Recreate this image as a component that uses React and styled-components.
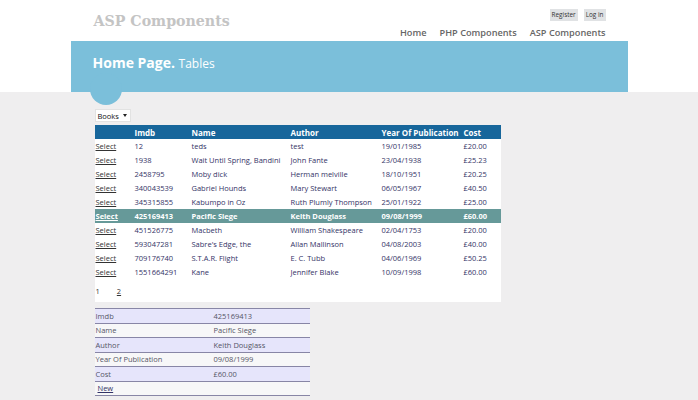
import React from "react";
import styled, { createGlobalStyle } from "styled-components";

const GlobalStyle = createGlobalStyle`
  body {
    margin: 0;
    background: #efeeef;
    font-family: "Open Sans", "Noto Sans", sans-serif;
    color: #333;
  }
`;

const books = [
  ["12", "teds", "test", "19/01/1985", "£20.00"],
  ["1938", "Wait Until Spring, Bandini", "John Fante", "23/04/1938", "£25.23"],
  ["2458795", "Moby dick", "Herman melville", "18/10/1951", "£20.25"],
  ["340043539", "Gabriel Hounds", "Mary Stewart", "06/05/1967", "£40.50"],
  ["345315855", "Kabumpo in Oz", "Ruth Plumly Thompson", "25/01/1922", "£25.00"],
  ["425169413", "Pacific Siege", "Keith Douglass", "09/08/1999", "£60.00"],
  ["451526775", "Macbeth", "William Shakespeare", "02/04/1753", "£20.00"],
  ["593047281", "Sabre's Edge, the", "Allan Mallinson", "04/08/2003", "£40.00"],
  ["709176740", "S.T.A.R. Flight", "E. C. Tubb", "04/06/1969", "£50.25"],
  ["1551664291", "Kane", "Jennifer Blake", "10/09/1998", "£60.00"],
];

const selected = 5;

const details = [
  ["Imdb", "425169413"],
  ["Name", "Pacific Siege"],
  ["Author", "Keith Douglass"],
  ["Year Of Publication", "09/08/1999"],
  ["Cost", "£60.00"],
];

const TopBar = styled.header`
  background: #fff;
`;

const TopInner = styled.div`
  width: 557px;
  margin: 0 auto;
  box-sizing: border-box;
  height: 41px;
  padding: 0 22px 0 23px;
  display: flex;
  justify-content: space-between;
`;

const SiteTitle = styled.div`
  font-family: "DejaVu Serif", serif;
  font-weight: bold;
  font-size: 14.2px;
  color: #c4c4c4;
  padding-top: 12px;
  line-height: 18px;
`;

const RightCol = styled.div`
  display: flex;
  flex-direction: column;
  align-items: flex-end;
  padding-top: 9px;
`;

const LoginBar = styled.div`
  display: flex;
  gap: 6px;
`;

const LoginButton = styled.a`
  background: #e0e2e4;
  color: #333;
  font-size: 6.4px;
  line-height: 12px;
  padding: 0 2px;
`;

const Nav = styled.nav`
  display: flex;
  gap: 13px;
  margin-top: 5px;
`;

const NavLink = styled.a`
  font-size: 9.2px;
  font-weight: 600;
  color: #666;
  line-height: 13px;
`;

const BandWrap = styled.div`
  background: #fff;
`;

const Band = styled.div`
  width: 557px;
  margin: 0 auto;
  height: 51px;
  background: #7bbfda;
  position: relative;
  box-sizing: border-box;
  padding: 12px 0 0 22px;
  color: #fff;

  &::after {
    content: "";
    position: absolute;
    left: 19px;
    bottom: -13px;
    width: 32px;
    height: 32px;
    border-radius: 50%;
    background: #7bbfda;
  }
`;

const PageTitle = styled.h1`
  margin: 0;
  font-size: 14px;
  font-weight: bold;
  line-height: 20px;

  span {
    font-weight: normal;
    font-size: 12px;
  }
`;

const Main = styled.main`
  width: 557px;
  margin: 0 auto;
  box-sizing: border-box;
  padding: 17px 0 0 24px;
`;

const Select = styled.div`
  display: flex;
  width: fit-content;
  align-items: center;
  gap: 4px;
  background: #fff;
  border: 1px solid #e2e2e2;
  font-size: 7.5px;
  color: #111;
  height: 11px;
  padding: 0 3px 0 2px;
  margin-bottom: 3px;
`;

const Caret = styled.span`
  width: 0;
  height: 0;
  border-left: 2.5px solid transparent;
  border-right: 2.5px solid transparent;
  border-top: 3px solid #222;
`;

const GridWrap = styled.div`
  width: 406px;
  background: #fff;
`;

const Grid = styled.table`
  width: 100%;
  border-collapse: collapse;
  table-layout: fixed;
  font-size: 7.5px;
`;

const HeadCell = styled.th`
  background: #17669b;
  color: #fff;
  font-weight: bold;
  font-size: 8px;
  text-align: left;
  height: 14px;
  padding: 0 0 0 1px;
  white-space: nowrap;
`;

const Row = styled.tr`
  background: ${(p) => (p.$selected ? "#669999" : "#fff")};
  color: ${(p) => (p.$selected ? "#fff" : "#333366")};
  font-weight: ${(p) => (p.$selected ? "bold" : "normal")};
`;

const Cell = styled.td`
  height: 14px;
  padding: 0 0 0 1px;
  white-space: nowrap;
  overflow: hidden;
`;

const RowLink = styled.a`
  color: ${(p) => (p.$selected ? "#fff" : "#333")};
  text-decoration: underline;
`;

const Pager = styled.div`
  display: flex;
  gap: 17px;
  height: 23px;
  align-items: center;
  font-size: 7.5px;
  color: #333;
  padding-left: 1px;
`;

const PageLink = styled.a`
  text-decoration: underline;
`;

const Details = styled.table`
  width: 215px;
  margin-top: 6px;
  border-collapse: collapse;
  table-layout: fixed;
  font-size: 7.5px;
  color: #555566;
  border-top: 1px solid #8886a6;
`;

const DetailRow = styled.tr`
  background: ${(p) => (p.$alt ? "#f7f7f8" : "#e6e5fb")};
  border-bottom: 1px solid #8886a6;
`;

const DetailCell = styled.td`
  height: 13.5px;
  padding: 0 0 0 1px;
  white-space: nowrap;
`;

const NewLink = styled.a`
  color: #333366;
  text-decoration: underline;
  margin-left: 2px;
`;

export default function App() {
  return (
    <>
      <GlobalStyle />
      <TopBar>
        <TopInner>
          <SiteTitle>ASP Components</SiteTitle>
          <RightCol>
            <LoginBar>
              <LoginButton>Register</LoginButton>
              <LoginButton>Log in</LoginButton>
            </LoginBar>
            <Nav>
              <NavLink>Home</NavLink>
              <NavLink>PHP Components</NavLink>
              <NavLink>ASP Components</NavLink>
            </Nav>
          </RightCol>
        </TopInner>
      </TopBar>
      <BandWrap>
        <Band>
          <PageTitle>
            Home Page. <span>Tables</span>
          </PageTitle>
        </Band>
      </BandWrap>
      <Main>
        <Select>
          Books <Caret />
        </Select>
        <GridWrap>
          <Grid>
            <colgroup>
              <col style={{ width: 39 }} />
              <col style={{ width: 57 }} />
              <col style={{ width: 99 }} />
              <col style={{ width: 91 }} />
              <col style={{ width: 82 }} />
              <col />
            </colgroup>
            <thead>
              <tr>
                <HeadCell />
                <HeadCell>Imdb</HeadCell>
                <HeadCell>Name</HeadCell>
                <HeadCell>Author</HeadCell>
                <HeadCell>Year Of Publication</HeadCell>
                <HeadCell>Cost</HeadCell>
              </tr>
            </thead>
            <tbody>
              {books.map((b, i) => (
                <Row key={b[0]} $selected={i === selected}>
                  <Cell>
                    <RowLink $selected={i === selected}>Select</RowLink>
                  </Cell>
                  {b.map((v, j) => (
                    <Cell key={j}>{v}</Cell>
                  ))}
                </Row>
              ))}
            </tbody>
          </Grid>
          <Pager>
            <span>1</span>
            <PageLink>2</PageLink>
          </Pager>
        </GridWrap>
        <Details>
          <colgroup>
            <col style={{ width: 118 }} />
            <col />
          </colgroup>
          <tbody>
            {details.map(([k, v], i) => (
              <DetailRow key={k} $alt={i % 2 === 1}>
                <DetailCell>{k}</DetailCell>
                <DetailCell>{v}</DetailCell>
              </DetailRow>
            ))}
            <DetailRow $alt>
              <DetailCell colSpan={2}>
                <NewLink>New</NewLink>
              </DetailCell>
            </DetailRow>
          </tbody>
        </Details>
      </Main>
    </>
  );
}
